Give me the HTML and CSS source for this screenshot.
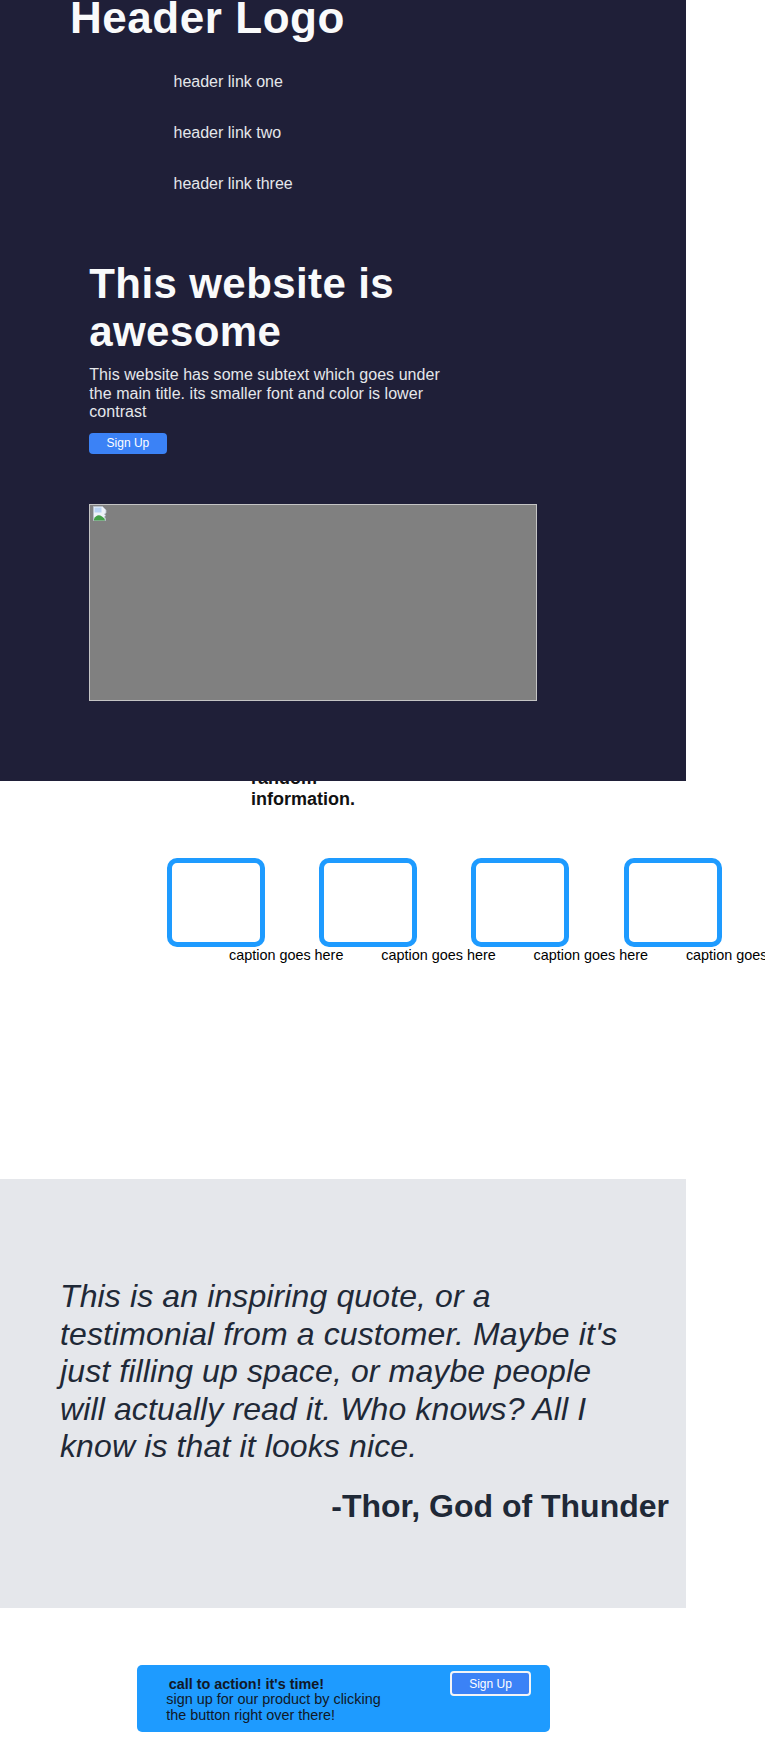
FILE: index.html
```html
<!DOCTYPE html>
<html lang="en">
<head>
<meta charset="utf-8">
<title>Landing page</title>
<link rel="stylesheet" href="styles.css">
</head>
<body>
<header class="site-header">
  <h1 class="logo">Header Logo</h1>
  <nav class="nav">
    <a class="nav-link" href="#">header link one</a>
    <a class="nav-link" href="#">header link two</a>
    <a class="nav-link" href="#">header link three</a>
  </nav>
  <section class="hero">
    <div class="hero-text">
      <h2 class="hero-title">This website is awesome</h2>
      <p class="hero-sub">This website has some subtext which goes under the main title. its smaller font and color is lower contrast</p>
      <button class="btn">Sign Up</button>
    </div>
    <div class="hero-image" role="img" aria-label="image">
      <svg class="broken-icon" width="14" height="15" viewBox="0 0 14 15">
        <path d="M0.5 0.5h9l3.5 3.5v3l-1.5 1 1 1.5-1 1.5 1 1.5v2H0.5z" fill="#eef2f8" stroke="#b8c0cc" stroke-width="0.8"/>
        <rect x="1.5" y="1.5" width="7" height="5" fill="#b9d3f2"/>
        <path d="M1 13 C3 9 6 8.5 9 10.5 L11.5 12.5 L12 14.5 H1z" fill="#43a047"/>
      </svg>
    </div>
  </section>
</header>
<main class="content">
  <p class="info">This is some random information.</p>
  <div class="features">
    <div class="feature"><div class="feature-box"></div><p class="caption">caption goes here</p></div>
    <div class="feature"><div class="feature-box"></div><p class="caption">caption goes here</p></div>
    <div class="feature"><div class="feature-box"></div><p class="caption">caption goes here</p></div>
    <div class="feature"><div class="feature-box"></div><p class="caption">caption goes here</p></div>
  </div>
  <section class="quote-section">
    <blockquote class="quote">This is an inspiring quote, or a testimonial from a customer. Maybe it's just filling up space, or maybe people will actually read it. Who knows? All I know is that it looks nice.</blockquote>
    <p class="author">-Thor, God of Thunder</p>
  </section>
  <div class="cta">
    <div class="cta-text">
      <p class="cta-title">call to action! it's time!</p>
      <p class="cta-sub">sign up for our product by clicking the button right over there!</p>
    </div>
    <button class="btn btn-outline">Sign Up</button>
  </div>
</main>
</body>
</html>
```

FILE: styles.css
```css
html, body {
  margin: 0;
  padding: 0;
}

body {
  font-family: "Liberation Sans", Arial, sans-serif;
  background: #ffffff;
  color: #111827;
  overflow-x: hidden;
}

.site-header {
  position: relative;
  z-index: 1;
  width: 686px;
  box-sizing: border-box;
  background: #1f1f38;
  padding-bottom: 80px;
}

.logo {
  margin: 0 0 0 70px;
  font-size: 44px;
  font-weight: 700;
  line-height: 36px;
  letter-spacing: 0.55px;
  color: #f9fafb;
}

.nav {
  display: flex;
  flex-direction: column;
  align-items: flex-start;
  gap: 32.8px;
  margin: 37.2px 0 0 173.5px;
}

.nav-link {
  font-size: 16px;
  line-height: 18px;
  color: #e5e7eb;
  text-decoration: none;
}

.hero {
  margin-top: 66.8px;
  padding-left: 89.3px;
}

.hero-text {
  width: 360px;
}

.hero-title {
  margin: 0;
  font-size: 42px;
  font-weight: 700;
  line-height: 48.4px;
  letter-spacing: 0.4px;
  color: #f9fafb;
}

.hero-sub {
  margin: 9.4px 0 0;
  font-size: 16px;
  line-height: 18.8px;
  letter-spacing: 0.04px;
  color: #e5e7eb;
}

.btn {
  display: block;
  font-family: "Liberation Sans", Arial, sans-serif;
  font-size: 12px;
  line-height: 14px;
  color: #ffffff;
  background: #3b82f6;
  border: 0;
  border-radius: 4px;
  padding: 3.8px 17.3px;
}

.hero .btn {
  margin-top: 10.5px;
}

.hero-image {
  position: relative;
  margin-top: 49.7px;
  width: 448px;
  height: 196.7px;
  box-sizing: border-box;
  background: #808080;
  border: 1px solid #c4c4c4;
}

.broken-icon {
  position: absolute;
  left: 3px;
  top: 1.5px;
}

.content {
  display: block;
}

.info {
  margin: -33.45px 0 0 251px;
  width: 115px;
  font-size: 18px;
  font-weight: 700;
  line-height: 20.7px;
  color: #111111;
}

.features {
  display: flex;
  gap: 54.3px;
  margin: 48.95px 0 0 166.7px;
}

.feature {
  display: flex;
  flex-direction: column;
  align-items: flex-start;
  flex: 0 0 98px;
  min-width: 0;
}

.feature-box {
  width: 98px;
  height: 89px;
  box-sizing: border-box;
  border: 5px solid #1e9bff;
  border-radius: 10px;
}

.caption {
  margin: -0.55px 0 0 62.3px;
  font-size: 14.4px;
  line-height: 16.5px;
  white-space: nowrap;
  color: #000000;
}

.quote-section {
  margin-top: 216.05px;
  width: 686px;
  box-sizing: border-box;
  background: #e5e7eb;
  padding: 98.6px 17px 82.15px 60px;
  color: #1f2937;
}

.quote {
  margin: 0;
  max-width: 565px;
  font-size: 32px;
  font-style: italic;
  line-height: 37.65px;
  letter-spacing: 0.12px;
}

.author {
  margin: 22.35px 0 0;
  text-align: right;
  font-size: 32px;
  font-weight: 700;
  line-height: 37.65px;
}

.cta {
  display: flex;
  justify-content: space-between;
  align-items: flex-start;
  margin: 56.7px 0 18.7px 136.7px;
  width: 413px;
  height: 67.3px;
  box-sizing: border-box;
  padding-right: 18.3px;
  background: #1e9bff;
  border-radius: 5px;
  color: #111827;
}

.cta-text {
  padding-top: 13.4px;
}

.cta-title {
  margin: 0 0 0 32px;
  font-size: 14.4px;
  font-weight: 700;
  line-height: 13.2px;
}

.cta-sub {
  margin: -0.5px 0 0 29.6px;
  max-width: 225px;
  font-size: 14.4px;
  line-height: 16.4px;
}

.btn-outline {
  margin-top: 6.3px;
  border: 2px solid #f3f4f6;
  padding: 3.35px 17.5px;
}
```
